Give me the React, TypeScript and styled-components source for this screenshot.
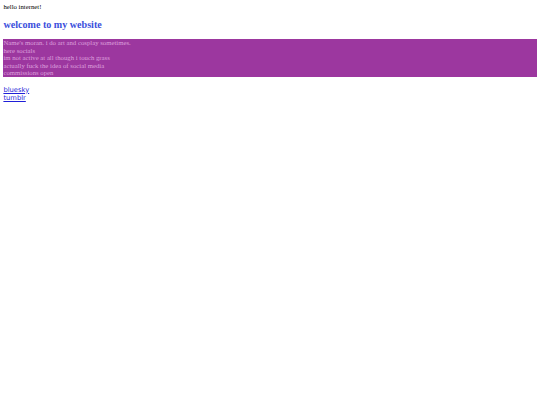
import React from "react";
import styled, { createGlobalStyle } from "styled-components";

const Global = createGlobalStyle`
  html { background: #ffffff; }
  body {
    margin: 3.4px;
    font-family: "Liberation Serif", "Times New Roman", serif;
    font-size: 6.75px;
    line-height: 7.7px;
    color: #000;
  }
`;

const Greeting = styled.div`
  font-size: 6.75px;
  line-height: 7.7px;
`;

const Heading = styled.h2`
  font-family: "Liberation Serif", serif;
  font-size: 10.1px;
  line-height: 11.6px;
  font-weight: bold;
  color: #3b4fdc;
  margin: 8.2px 0;
`;

const Bio = styled.div`
  background: #9c379f;
  color: #dda0dd;
  font-size: 6.75px;
  line-height: 7.6px;
`;

const Links = styled.div`
  margin-top: 8.6px;
  font-family: "DejaVu Sans", Verdana, sans-serif;
  font-size: 6.75px;
  line-height: 8px;
  display: flex;
  flex-direction: column;
  align-items: flex-start;
`;

const Link = styled.a`
  color: #1f1fd8;
  text-decoration: underline;
`;

export default function App() {
  return (
    <>
      <Global />
      <Greeting>hello internet!</Greeting>
      <Heading>welcome to my website</Heading>
      <Bio>
        Name's moran. i do art and cosplay sometimes.
        <br />
        here socials
        <br />
        im not active at all though i touch grass
        <br />
        actually fuck the idea of social media
        <br />
        commissions open
      </Bio>
      <Links>
        <Link href="#">bluesky</Link>
        <Link href="#">tumblr</Link>
      </Links>
    </>
  );
}
